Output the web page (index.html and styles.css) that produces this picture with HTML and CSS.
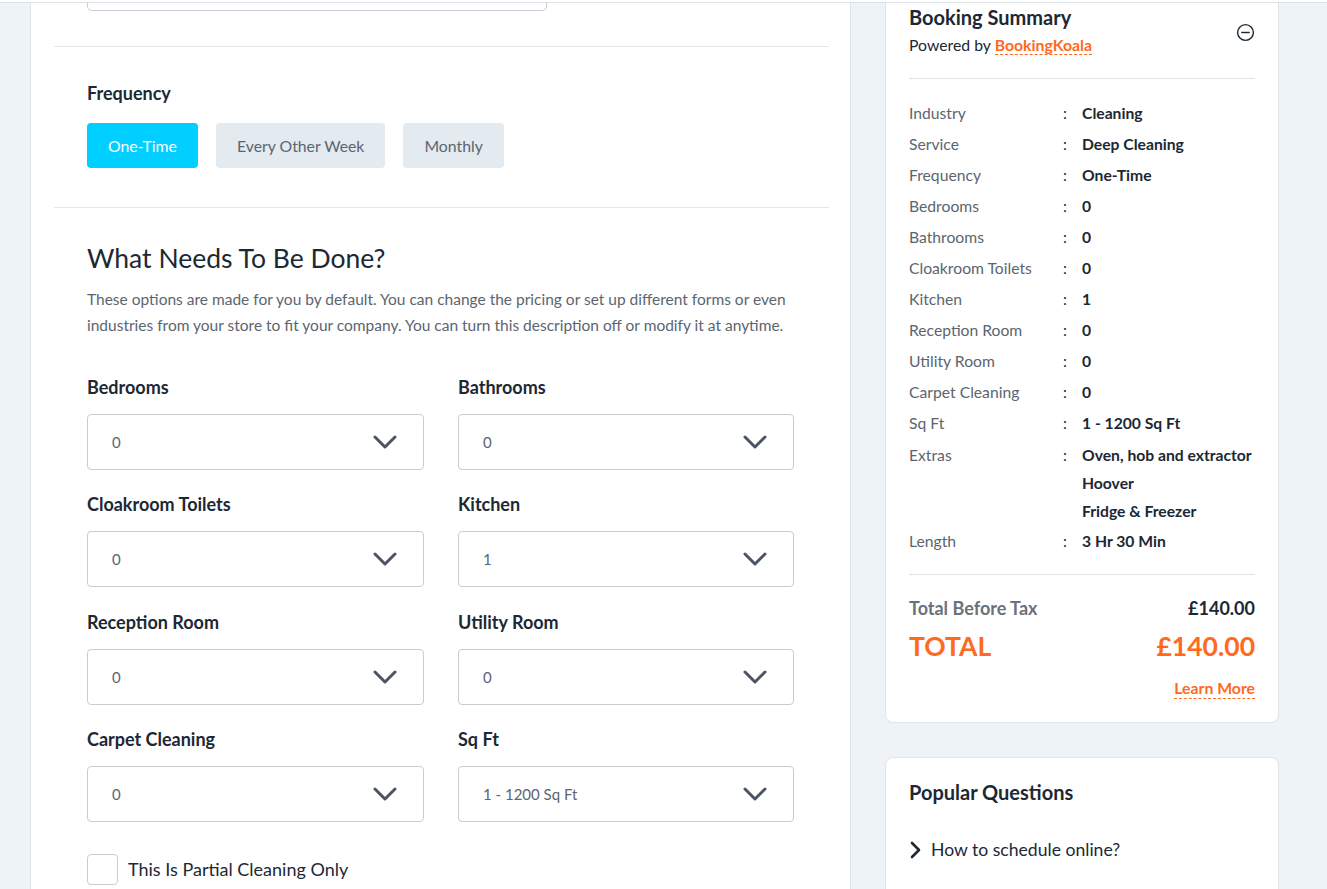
FILE: index.html
```html
<!DOCTYPE html>
<html lang="en">
<head>
<meta charset="utf-8">
<title>Booking</title>
<link rel="stylesheet" href="styles.css">
</head>
<body>
<div class="topbar"></div>
<div class="page">
  <main class="main">
    <section class="sec sec-top">
      <div class="prev-input"></div>
    </section>
    <section class="sec sec-freq">
      <h3 class="label">Frequency</h3>
      <div class="freq-btns">
        <button class="fbtn active">One-Time</button>
        <button class="fbtn">Every Other Week</button>
        <button class="fbtn">Monthly</button>
      </div>
    </section>
    <section class="sec sec-what">
      <h2 class="title">What Needs To Be Done?</h2>
      <p class="desc">These options are made for you by default. You can change the pricing or set up different forms or even industries from your store to fit your company. You can turn this description off or modify it at anytime.</p>
      <div class="grid">
        <div class="field"><h3 class="label">Bedrooms</h3><div class="select"><span>0</span><svg class="chev" viewBox="0 0 24 14"><polyline points="2,2 12,12 22,2"/></svg></div></div>
        <div class="field"><h3 class="label">Bathrooms</h3><div class="select"><span>0</span><svg class="chev" viewBox="0 0 24 14"><polyline points="2,2 12,12 22,2"/></svg></div></div>
        <div class="field"><h3 class="label">Cloakroom Toilets</h3><div class="select"><span>0</span><svg class="chev" viewBox="0 0 24 14"><polyline points="2,2 12,12 22,2"/></svg></div></div>
        <div class="field"><h3 class="label">Kitchen</h3><div class="select"><span>1</span><svg class="chev" viewBox="0 0 24 14"><polyline points="2,2 12,12 22,2"/></svg></div></div>
        <div class="field"><h3 class="label">Reception Room</h3><div class="select"><span>0</span><svg class="chev" viewBox="0 0 24 14"><polyline points="2,2 12,12 22,2"/></svg></div></div>
        <div class="field"><h3 class="label">Utility Room</h3><div class="select"><span>0</span><svg class="chev" viewBox="0 0 24 14"><polyline points="2,2 12,12 22,2"/></svg></div></div>
        <div class="field"><h3 class="label">Carpet Cleaning</h3><div class="select"><span>0</span><svg class="chev" viewBox="0 0 24 14"><polyline points="2,2 12,12 22,2"/></svg></div></div>
        <div class="field"><h3 class="label">Sq Ft</h3><div class="select"><span>1 - 1200 Sq Ft</span><svg class="chev" viewBox="0 0 24 14"><polyline points="2,2 12,12 22,2"/></svg></div></div>
      </div>
      <label class="check"><span class="box"></span><span>This Is Partial Cleaning Only</span></label>
    </section>
  </main>
  <aside class="side">
    <div class="card summary">
      <div class="sum-head">
        <div>
          <h3 class="card-title">Booking Summary</h3>
          <div class="powered">Powered by <a class="bk">BookingKoala</a></div>
        </div>
        <svg class="minus" viewBox="0 0 20 20"><circle cx="10" cy="10" r="8.3"/><line x1="5.5" y1="10" x2="14.5" y2="10"/></svg>
      </div>
      <div class="rows">
        <div class="row"><span class="k">Industry</span><span class="c">:</span><span class="v">Cleaning</span></div>
        <div class="row"><span class="k">Service</span><span class="c">:</span><span class="v">Deep Cleaning</span></div>
        <div class="row"><span class="k">Frequency</span><span class="c">:</span><span class="v">One-Time</span></div>
        <div class="row"><span class="k">Bedrooms</span><span class="c">:</span><span class="v">0</span></div>
        <div class="row"><span class="k">Bathrooms</span><span class="c">:</span><span class="v">0</span></div>
        <div class="row"><span class="k">Cloakroom Toilets</span><span class="c">:</span><span class="v">0</span></div>
        <div class="row"><span class="k">Kitchen</span><span class="c">:</span><span class="v">1</span></div>
        <div class="row"><span class="k">Reception Room</span><span class="c">:</span><span class="v">0</span></div>
        <div class="row"><span class="k">Utility Room</span><span class="c">:</span><span class="v">0</span></div>
        <div class="row"><span class="k">Carpet Cleaning</span><span class="c">:</span><span class="v">0</span></div>
        <div class="row"><span class="k">Sq Ft</span><span class="c">:</span><span class="v">1 - 1200 Sq Ft</span></div>
        <div class="row row-multi"><span class="k">Extras</span><span class="c">:</span><span class="v"><span>Oven, hob and extractor</span><span>Hoover</span><span>Fridge &amp; Freezer</span></span></div>
        <div class="row"><span class="k">Length</span><span class="c">:</span><span class="v">3 Hr 30 Min</span></div>
      </div>
      <div class="totals">
        <div class="tline"><span class="tk">Total Before Tax</span><span class="tv">£140.00</span></div>
        <div class="tline grand"><span>TOTAL</span><span>£140.00</span></div>
        <div class="learn"><a class="lm">Learn More</a></div>
      </div>
    </div>
    <div class="card faq">
      <h3 class="card-title">Popular Questions</h3>
      <div class="q"><svg class="qchev" viewBox="0 0 12 18"><polyline points="3,2 10,9 3,16"/></svg><span>How to schedule online?</span></div>
    </div>
  </aside>
</div>
</body>
</html>
```

FILE: styles.css
```css
* { box-sizing: border-box; }
html, body { margin: 0; padding: 0; }
body {
  background: #eef3f8;
  font-family: Lato, "Open Sans", Arial, sans-serif;
  color: #1c2833;
  height: 889px;
  overflow: hidden;
}
h1, h2, h3, p { margin: 0; }
a { text-decoration: none; }

.topbar {
  height: 3px;
  background: #ffffff;
  border-bottom: 1px solid #dde2e7;
}

.page {
  display: flex;
  align-items: flex-start;
  padding-left: 30px;
}

.main {
  width: 821px;
  min-height: 900px;
  background: #fff;
  border-left: 1px solid #dfe4e9;
  border-right: 1px solid #dfe4e9;
  padding: 0 21px 0 23px;
  flex: none;
}

.sec { padding: 0 33px; border-bottom: 1px solid #e3e7eb; }
.sec:last-child { border-bottom: none; }

.sec-top { padding-bottom: 35px; }
.prev-input {
  width: 460px;
  height: 8px;
  border: 1px solid #c9cdd2;
  border-top: none;
  border-radius: 0 0 5px 5px;
}

.sec-freq { padding-top: 35px; padding-bottom: 39px; }
.label {
  font-size: 18px;
  line-height: 22px;
  font-weight: 700;
  color: #1c2833;
}
.freq-btns { display: flex; gap: 18px; margin-top: 19px; }
.fbtn {
  height: 45px;
  border: none;
  border-radius: 4px;
  background: #e3eaf0;
  color: #5b6570;
  font-family: inherit;
  font-size: 15.8px;
  padding: 0 21px;
}
.fbtn.active { background: #00cfff; color: #fff; }

.sec-what { padding-top: 33px; }
.title {
  font-size: 26.5px;
  line-height: 34px;
  font-weight: 400;
  color: #1c2833;
}
.desc {
  margin-top: 11px;
  font-size: 15.5px;
  line-height: 26px;
  color: #5b6570;
}
.grid {
  margin-top: 38px;
  display: grid;
  grid-template-columns: 337px 336px;
  column-gap: 34px;
  row-gap: 23.33px;
}
.field .label { margin-bottom: 16px; }
.select {
  height: 56px;
  border: 1px solid #c9cdd2;
  border-radius: 4px;
  display: flex;
  align-items: center;
  justify-content: space-between;
  padding: 0 26px 0 24px;
  font-size: 15px;
  color: #5b6570;
}
.chev { width: 24px; height: 14px; }
.chev polyline {
  fill: none;
  stroke: #4a5561;
  stroke-width: 3;
  stroke-linecap: round;
  stroke-linejoin: round;
}

.check {
  margin-top: 32px;
  display: flex;
  align-items: center;
  gap: 10px;
  font-size: 18px;
  color: #1c2833;
}
.box {
  width: 31px;
  height: 31px;
  border: 1px solid #c9cdd2;
  border-radius: 4px;
  background: #fff;
}

.side { margin-left: 34px; width: 394px; flex: none; }
.card {
  background: #fff;
  border: 1px solid #dfe4e9;
  border-radius: 8px;
  padding: 0 23px;
}
.summary {
  border-top: none;
  border-radius: 0 0 8px 8px;
  padding-top: 2px;
  padding-bottom: 24px;
}
.sum-head {
  display: flex;
  justify-content: space-between;
  align-items: flex-start;
  padding-bottom: 23px;
  border-bottom: 1px solid #dfe3e8;
}
.card-title {
  font-size: 20px;
  line-height: 24px;
  font-weight: 700;
  color: #1c2833;
}
.powered {
  margin-top: 6px;
  font-size: 15.8px;
  line-height: 20px;
  color: #1c2833;
}
.bk {
  color: #ff6a1c;
  font-weight: 700;
  border-bottom: 1px dashed #ff6a1c;
}
.minus {
  width: 19px;
  height: 19px;
  margin-top: 18px;
  margin-right: 0;
}
.minus circle, .minus line {
  fill: none;
  stroke: #1c2833;
  stroke-width: 1.5;
}

.rows { padding-top: 19px; padding-bottom: 17px; border-bottom: 1px solid #dfe3e8; }
.row {
  display: grid;
  grid-template-columns: 154px 19px 1fr;
  font-size: 15.7px;
  line-height: 31px;
}
.row-multi { line-height: 28px; padding: 1.5px 0; }
.k { color: #5b6570; }
.c { color: #1c2833; }
.v { font-weight: 700; color: #1c2833; display: flex; flex-direction: column; }

.totals { padding-top: 21px; }
.tline {
  display: flex;
  justify-content: space-between;
  align-items: center;
}
.tk { font-size: 18px; line-height: 24px; font-weight: 700; color: #6b7178; }
.tv { font-size: 18px; line-height: 24px; font-weight: 700; color: #1c2833; }
.grand {
  margin-top: 9px;
  font-size: 26.5px;
  line-height: 34px;
  font-weight: 700;
  color: #ff6a1c;
}
.learn { margin-top: 15px; text-align: right; font-size: 15.8px; line-height: 20px; }
.lm {
  color: #ff6a1c;
  font-weight: 700;
  border-bottom: 1px dashed #ff6a1c;
  padding-bottom: 1px;
}

.faq { margin-top: 34px; padding-top: 22px; height: 200px; }
.q {
  margin-top: 34px;
  display: flex;
  align-items: center;
  gap: 10px;
  font-size: 17.6px;
  line-height: 24px;
  color: #1c2833;
}
.qchev { width: 12px; height: 18px; }
.qchev polyline {
  fill: none;
  stroke: #1c2833;
  stroke-width: 2.6;
  stroke-linecap: round;
  stroke-linejoin: round;
}
```
